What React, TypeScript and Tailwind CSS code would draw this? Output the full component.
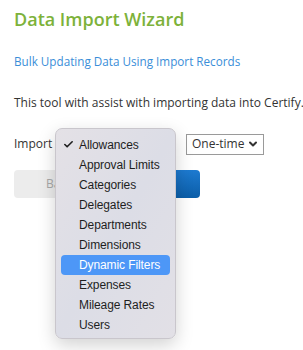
import { Check, ChevronDown } from 'lucide-react';

const items = [
  'Allowances',
  'Approval Limits',
  'Categories',
  'Delegates',
  'Departments',
  'Dimensions',
  'Dynamic Filters',
  'Expenses',
  'Mileage Rates',
  'Users',
];

export default function App() {
  return (
    <div className="relative w-[303px] h-[350px] bg-white overflow-hidden font-['Open_Sans',sans-serif] text-[#333]">
      <div className="px-[14px] pt-[4px]">
        <h1 className="text-[18px] leading-[30px] font-semibold text-[#7db23a]">Data Import Wizard</h1>
        <a className="block mt-[17px] text-[11.7px] leading-[20px] text-[#3a8ed8] whitespace-nowrap">Bulk Updating Data Using Import Records</a>
        <p className="mt-[22px] text-[12px] leading-[20px] whitespace-nowrap">This tool with assist with importing data into Certify.</p>

        <div className="mt-[20px] flex items-center h-[22px]">
          <span className="text-[12px] w-[172px]">Import</span>
          <div className="w-[78px] h-[21px] border border-[#9a9a9a] flex items-center justify-between pl-[5px] pr-[4px] text-[12px] whitespace-nowrap">
            <span>One-time</span>
            <ChevronDown className="w-[12px] h-[12px]" strokeWidth={4} />
          </div>
        </div>

        <div className="mt-[15px] flex gap-[6px]">
          <button className="w-[96px] h-[28px] rounded-[4px] bg-[#ececec] text-[12px] text-[#a8a8a8] text-left pl-[32px]">Back</button>
          <button className="w-[84px] h-[28px] rounded-[4px] bg-gradient-to-b from-[#1d7ad0] to-[#0b5ea8] text-[12px] text-white">Next</button>
        </div>
      </div>

      <div className="absolute left-[55px] top-[128px] w-[121px] h-[211px] rounded-[7px] border border-[#c9c6cc] bg-gradient-to-br from-[#e4e1e6] via-[#dcdde6] to-[#e2e0e6] shadow-[0_6px_18px_rgba(0,0,0,0.18)] px-[5px] py-[6px] font-['Liberation_Sans',sans-serif]">
        {items.map(item => {
          const active = item === 'Dynamic Filters';
          return (
            <div
              key={item}
              className={
                'relative h-[20px] flex items-center pl-[18px] text-[12px] tracking-[-0.1px] rounded-[4px] ' +
                (active ? 'bg-[#4d97f7] text-white' : 'text-[#1e1e1e]')
              }
            >
              {item === 'Allowances' && (
                <Check className="absolute left-[2px] top-[4px] w-[11px] h-[11px]" strokeWidth={3.5} />
              )}
              {item}
            </div>
          );
        })}
      </div>
    </div>
  );
}
